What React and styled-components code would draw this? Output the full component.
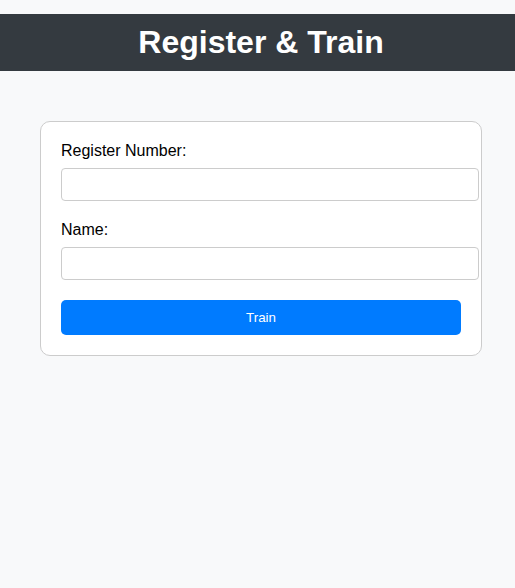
import styled, { createGlobalStyle } from 'styled-components';
import { useState } from 'react';

const GlobalStyle = createGlobalStyle`
  html, body {
    margin: 0;
    padding: 0;
    background-color: #f8f9fa;
    font-family: "Liberation Sans", Arial, sans-serif;
  }
`;

function App() {
  const [regNo, setRegNo] = useState('');
  const [name, setName] = useState('');

  return (
    <Page>
      <GlobalStyle />
      <Header>
        <h1>Register &amp; Train</h1>
      </Header>
      <Card>
        <Field>
          <label>Register Number:</label>
          <input
            type='text'
            value={regNo}
            onChange={(e) => setRegNo(e.target.value)}
          />
        </Field>
        <Field>
          <label>Name:</label>
          <input
            type='text'
            value={name}
            onChange={(e) => setName(e.target.value)}
          />
        </Field>
        <TrainButton>Train</TrainButton>
      </Card>
    </Page>
  );
}

export default App;

const Page = styled.div`
  padding-top: 14px;
  min-height: 100vh;
  box-sizing: border-box;
`;

const Header = styled.header`
  background-color: #343a40;
  color: white;
  text-align: center;
  padding: 10px 0 10px 7px;

  h1 {
    margin: 0;
    font-size: 32px;
    line-height: 37px;
    font-weight: 700;
  }
`;

const Card = styled.div`
  width: 400px;
  margin: 50px 0 0 40px;
  padding: 20px;
  background: white;
  border: 1px solid #ccc;
  border-radius: 10px;
`;

const Field = styled.div`
  margin-bottom: 20px;

  label {
    display: block;
    font-size: 16px;
    line-height: 18px;
    margin-bottom: 8px;
    color: #000;
  }

  input {
    display: block;
    width: 100%;
    padding: 8px;
    font-size: 13.33px;
    line-height: 15px;
    border: 1px solid #ccc;
    border-radius: 4px;
    font-family: "Liberation Sans", Arial, sans-serif;
  }
`;

const TrainButton = styled.button`
  display: block;
  width: 100%;
  padding: 10px;
  border: none;
  border-radius: 5px;
  background-color: #007bff;
  color: white;
  font-size: 13.33px;
  line-height: 15px;
  font-family: "Liberation Sans", Arial, sans-serif;
  cursor: pointer;
`;
